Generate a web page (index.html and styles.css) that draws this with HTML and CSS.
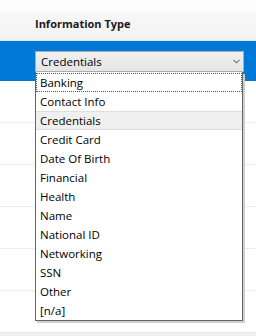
FILE: index.html
```html
<!DOCTYPE html>
<html>
<head>
<meta charset="utf-8">
<link rel="stylesheet" href="styles.css">
</head>
<body>
<div class="page">
  <div class="topgap"></div>
  <div class="header"><span class="htitle">Information Type</span></div>
  <div class="band"></div>
  <div class="rows">
    <div class="row"></div>
    <div class="row"></div>
    <div class="row"></div>
    <div class="row"></div>
    <div class="row"></div>
    <div class="row"></div>
  </div>
  <div class="bottombar"></div>

  <div class="combo">
    <div class="select">
      <span>Credentials</span>
      <svg class="chev" width="7" height="5" viewBox="0 0 7 5"><path d="M0.5 0.8 L3.5 3.8 L6.5 0.8" fill="none" stroke="#707070" stroke-width="1.1"/></svg>
    </div>
    <ul class="list">
      <li class="item focus">Banking</li>
      <li class="item">Contact Info</li>
      <li class="item sel">Credentials</li>
      <li class="item">Credit Card</li>
      <li class="item">Date Of Birth</li>
      <li class="item">Financial</li>
      <li class="item">Health</li>
      <li class="item">Name</li>
      <li class="item">National ID</li>
      <li class="item">Networking</li>
      <li class="item">SSN</li>
      <li class="item">Other</li>
      <li class="item">[n/a]</li>
    </ul>
  </div>
</div>
</body>
</html>
```
FILE: styles.css
```css
html, body {
  margin: 0;
  padding: 0;
  background: #ffffff;
}
body {
  font-family: "Open Sans", "Noto Sans", "Liberation Sans", sans-serif;
  color: #000;
  width: 256px;
  height: 336px;
  overflow: hidden;
}
.page {
  position: relative;
  width: 256px;
  height: 336px;
}
.topgap {
  height: 14px;
  background: linear-gradient(#ffffff, #fbfbfb);
}
.header {
  height: 27px;
  box-sizing: border-box;
  padding-left: 35px;
  padding-top: 2px;
  background: linear-gradient(#f7f7f7, #f2f2f2);
  border-bottom: 1px solid #dfe8f2;
}
.htitle {
  font-weight: bold;
  font-size: 11px;
  line-height: 16px;
  color: #1a1a1a;
  display: block;
}
.band {
  height: 40px;
  background: #0078d7;
}
.row {
  height: 41px;
  border-bottom: 1px solid #ececec;
}
.rows .row:last-child {
  height: 0;
  border-bottom: none;
}
.bottombar {
  position: absolute;
  left: 0;
  right: 0;
  bottom: 0;
  height: 3px;
  background: #f0f0f0;
  border-top: 1px solid #e6e6e6;
}
.combo {
  position: absolute;
  left: 35px;
  top: 51px;
  width: 209px;
}
.select {
  height: 21px;
  box-sizing: border-box;
  border: 1px solid #adadad;
  background: linear-gradient(#f0f0f0, #e5e5e5);
  display: flex;
  align-items: center;
  justify-content: space-between;
  padding: 0 3px 0 5px;
  font-size: 11.5px;
}
.select span {
  line-height: 19px;
}
.chev {
  display: block;
}
.list {
  list-style: none;
  margin: 0;
  padding: 1px 0 0 0;
  border: 1px solid #646464;
  border-top: none;
  background: #fff;
  box-shadow: 2px 2px 0 #cfcfcf;
  width: 208px;
  box-sizing: border-box;
}
.item {
  height: 19px;
  box-sizing: border-box;
  padding-left: 4px;
  font-size: 11.5px;
  line-height: 19px;
  white-space: nowrap;
}
.item.focus {
  border: 1px dotted #3d5f7a;
  padding-left: 3px;
  line-height: 17px;
}
.item.sel {
  background: #f0f0f0;
  border-top: 1px solid #dedede;
  border-bottom: 1px solid #dedede;
  line-height: 17px;
}
```
